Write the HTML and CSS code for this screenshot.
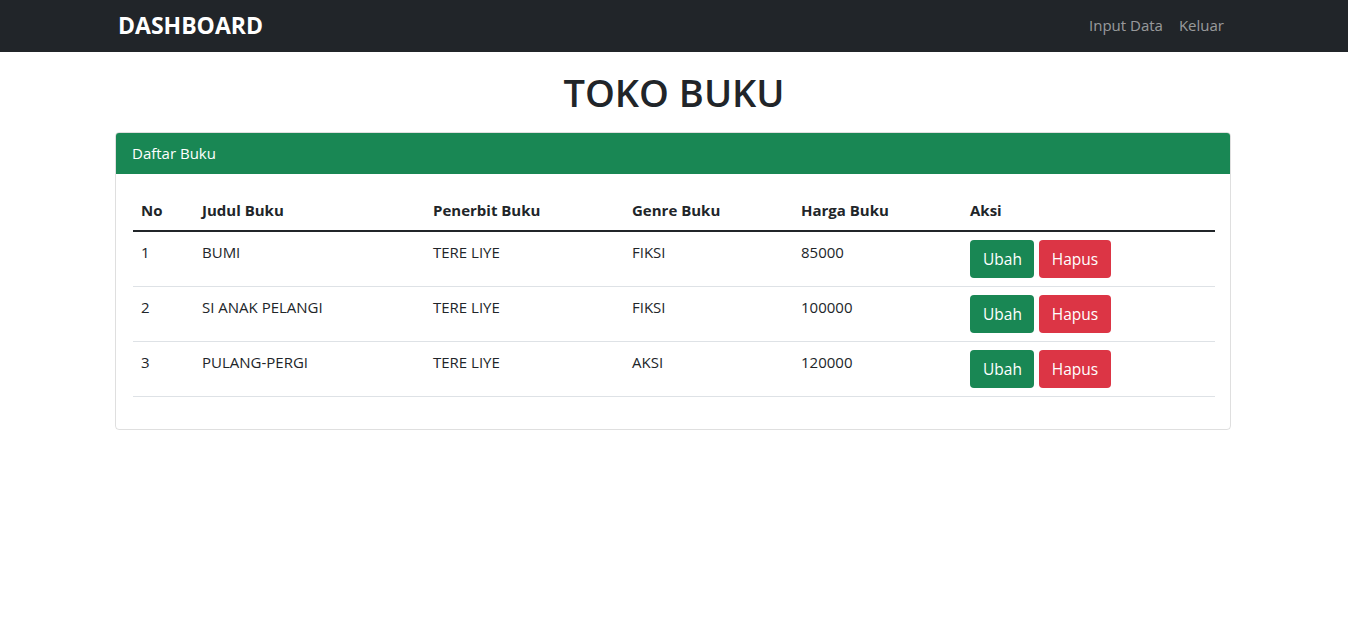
FILE: index.html
```html
<!DOCTYPE html>
<html lang="id">
<head>
<meta charset="utf-8">
<title>Toko Buku</title>
<link rel="stylesheet" href="styles.css">
</head>
<body>
<nav class="navbar">
  <div class="container nav-inner">
    <a class="brand" href="#">DASHBOARD</a>
    <div class="nav-links">
      <a class="nav-link" href="#">Input Data</a>
      <a class="nav-link" href="#">Keluar</a>
    </div>
  </div>
</nav>
<main class="container">
  <h1 class="title">TOKO BUKU</h1>
  <div class="card">
    <div class="card-header">Daftar Buku</div>
    <div class="card-body">
      <table class="table">
        <thead>
          <tr>
            <th class="c-no">No</th>
            <th class="c-judul">Judul Buku</th>
            <th class="c-penerbit">Penerbit Buku</th>
            <th class="c-genre">Genre Buku</th>
            <th class="c-harga">Harga Buku</th>
            <th class="c-aksi">Aksi</th>
          </tr>
        </thead>
        <tbody>
          <tr>
            <td>1</td><td>BUMI</td><td>TERE LIYE</td><td>FIKSI</td><td>85000</td>
            <td><a class="btn btn-success" href="#">Ubah</a> <a class="btn btn-danger" href="#">Hapus</a></td>
          </tr>
          <tr>
            <td>2</td><td>SI ANAK PELANGI</td><td>TERE LIYE</td><td>FIKSI</td><td>100000</td>
            <td><a class="btn btn-success" href="#">Ubah</a> <a class="btn btn-danger" href="#">Hapus</a></td>
          </tr>
          <tr>
            <td>3</td><td>PULANG-PERGI</td><td>TERE LIYE</td><td>AKSI</td><td>120000</td>
            <td><a class="btn btn-success" href="#">Ubah</a> <a class="btn btn-danger" href="#">Hapus</a></td>
          </tr>
        </tbody>
      </table>
    </div>
  </div>
</main>
</body>
</html>
```
FILE: styles.css
```css
* { box-sizing: border-box; }
body {
  margin: 0;
  font-family: "Open Sans", "Noto Sans", sans-serif;
  font-size: 15px;
  line-height: 24px;
  color: #212529;
  background: #fff;
}
a { text-decoration: none; }
.container {
  width: 1140px;
  margin: 0 auto;
  padding: 0 12px;
}
.navbar {
  background: #212529;
  height: 52px;
}
.nav-inner {
  height: 52px;
  display: flex;
  align-items: center;
  justify-content: space-between;
  padding-bottom: 3px;
}
.brand {
  color: #fff;
  font-weight: 700;
  font-size: 23px;
  line-height: 30px;
  padding-left: 2px;
}
.nav-links { display: flex; }
.nav-link {
  color: rgba(255,255,255,0.55);
  padding: 8px 8px;
  font-size: 15px;
}
.title {
  margin: 16px 0;
  text-align: center;
  font-size: 38px;
  line-height: 48px;
  font-weight: 600;
}
.card {
  border: 1px solid rgba(0,0,0,0.125);
  border-radius: 4px;
  overflow: hidden;
  margin: 0 1px 0 -1px;
}
.card-header {
  background: #198754;
  color: #fff;
  padding: 8px 16px;
  line-height: 25px;
}
.card-body { padding: 16px 15px 16px 17px; }
.table {
  width: 100%;
  border-collapse: collapse;
  margin-bottom: 16px;
}
.table th, .table td {
  padding: 8px;
  text-align: left;
  vertical-align: top;
  border-bottom: 1px solid #dee2e6;
}
.table th {
  font-weight: 700;
  border-bottom: 2px solid #212529;
}
.c-no { width: 61px; }
.c-judul { width: 231px; }
.c-penerbit { width: 199px; }
.c-genre { width: 169px; }
.c-harga { width: 169px; }
.btn {
  display: inline-block;
  padding: 6px 12px;
  border-radius: 4px;
  color: #fff;
  font-size: 15.5px;
  line-height: 26px;
}
.btn-success { background: #198754; padding: 6px 12px 6px 13px; }
.btn-danger { background: #dc3545; margin-left: 1px; padding: 6px 13px; }
```
